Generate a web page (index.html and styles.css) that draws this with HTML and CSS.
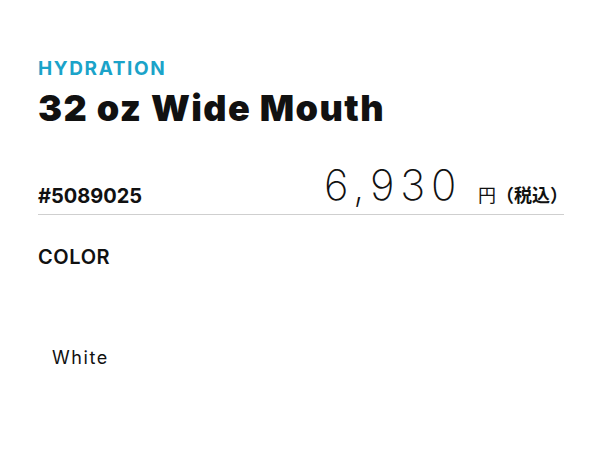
FILE: index.html
```html
<!DOCTYPE html>
<html lang="ja">
<head>
<meta charset="utf-8">
<title>32 oz Wide Mouth</title>
<link rel="stylesheet" href="styles.css">
</head>
<body>
<main class="product">
  <div class="category">HYDRATION</div>
  <h1 class="title">32 oz Wide Mouth</h1>
  <div class="price-row">
    <div class="sku">#5089025</div>
    <div class="price"><span class="num">6,930</span><span class="yen">円</span><span class="tax">（税込）</span></div>
  </div>
  <div class="color-label">COLOR</div>
  <div class="swatches">
    <div class="swatch">White</div>
  </div>
</main>
</body>
</html>
```
FILE: styles.css
```css
html, body {
  margin: 0;
  padding: 0;
  background: #fff;
}
body {
  font-family: Inter, "Noto Sans", "Noto Sans CJK JP", sans-serif;
  color: #111;
}
.product {
  padding: 57px 36px 0 38px;
}
.category {
  font-size: 19px;
  line-height: 24px;
  font-weight: 700;
  color: #1ba3c9;
  letter-spacing: 1.6px;
}
.title {
  margin: 5px 0 0;
  font-size: 36px;
  line-height: 44px;
  font-weight: 900;
  letter-spacing: 1.4px;
}
.price-row {
  margin-top: 35px;
  display: flex;
  justify-content: space-between;
  align-items: flex-end;
  border-bottom: 1px solid #cfcfcf;
  padding-bottom: 6px;
}
.sku {
  font-size: 20px;
  line-height: 24px;
  font-weight: 700;
  letter-spacing: 0;
}
.price {
  margin-bottom: 3px;
  margin-right: -4px;
  font-size: 42px;
  line-height: 40px;
  font-family: Inter, "Noto Sans CJK JP", sans-serif;
}
.num {
  font-weight: 200;
  letter-spacing: 5.75px;
}
.yen {
  margin-left: 16px;
  font-size: 18px;
  line-height: 1;
  font-weight: 400;
  vertical-align: -2px;
  font-family: "Noto Sans CJK JP", sans-serif;
}
.tax {
  font-size: 18px;
  line-height: 1;
  font-weight: 700;
  vertical-align: -2px;
  font-family: "Noto Sans CJK JP", sans-serif;
}
.color-label {
  margin-top: 30px;
  font-size: 20px;
  line-height: 24px;
  font-weight: 600;
  letter-spacing: 0.6px;
}
.swatches {
  margin-top: 78px;
  display: flex;
}
.swatch {
  padding-left: 14px;
  font-size: 18px;
  line-height: 22px;
  font-weight: 400;
  letter-spacing: 1.6px;
}
```
